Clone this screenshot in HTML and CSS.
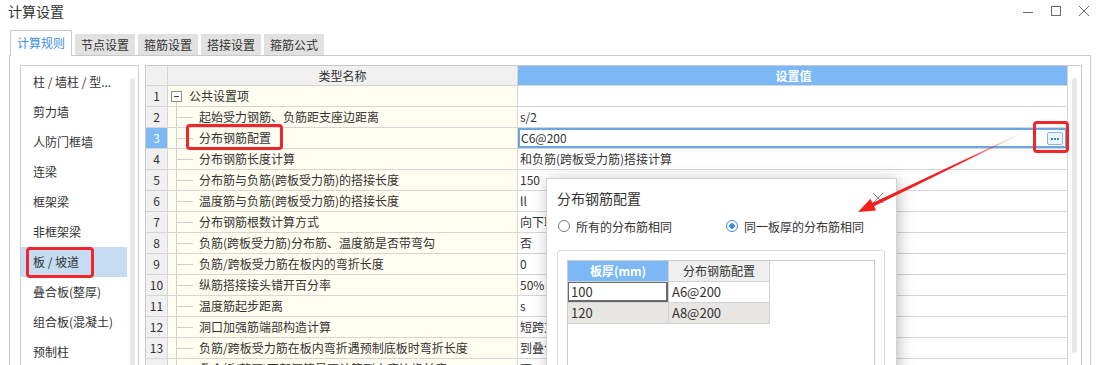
FILE: index.html
```html
<!DOCTYPE html>
<html lang="zh-CN">
<head>
    <meta charset="UTF-8">
    <meta name="viewport" content="width=device-width, initial-scale=1.0">
    <title>计算设置</title>
    <link rel="stylesheet" href="styles.css">
</head>
<body>
<div class="window">
    <div class="titlebar">
        <span class="wintitle">计算设置</span>
        <div class="winbtns">
            <svg width="10" height="10" viewBox="0 0 10 10"><path d="M0 6.5h10" stroke="#6b6b6b" stroke-width="1"/></svg>
            <svg width="10" height="10" viewBox="0 0 10 10"><rect x="0.5" y="0.5" width="9" height="9" fill="none" stroke="#6b6b6b"/></svg>
            <svg width="10" height="10" viewBox="0 0 10 10"><path d="M0 0L10 10M10 0L0 10" stroke="#6b6b6b" stroke-width="1"/></svg>
        </div>
    </div>

    <div class="tabs">
        <div class="tab active">计算规则</div>
        <div class="tab">节点设置</div>
        <div class="tab">箍筋设置</div>
        <div class="tab">搭接设置</div>
        <div class="tab">箍筋公式</div>
    </div>

    <div class="pane">
        <div class="sidebar">
            <ul class="menu">
                <li>柱 / 墙柱 / 型...</li>
                <li>剪力墙</li>
                <li>人防门框墙</li>
                <li>连梁</li>
                <li>框架梁</li>
                <li>非框架梁</li>
                <li class="sel">板 / 坡道</li>
                <li>叠合板(整厚)</li>
                <li>组合板(混凝土)</li>
                <li>预制柱</li>
            </ul>
            <div class="track"><div class="thumb"></div></div>
        </div>

        <div class="grid">
            <div class="cells">
                <div class="row head">
                    <div class="num"></div>
                    <div class="name">类型名称</div>
                    <div class="val">设置值</div>
                </div>
                <div class="row">
                    <div class="num">1</div>
                    <div class="name top"><i class="fold"></i>公共设置项</div>
                    <div class="val"></div>
                </div>
                <div class="row">
                    <div class="num">2</div>
                    <div class="name"><i class="tree"></i>起始受力钢筋、负筋距支座边距离</div>
                    <div class="val">s/2</div>
                </div>
                <div class="row cur">
                    <div class="num">3</div>
                    <div class="name"><i class="tree"></i>分布钢筋配置</div>
                    <div class="val">C6@200
                        <span class="more">
                            <svg width="14" height="11" viewBox="0 0 14 11"><rect x="3" y="5" width="2" height="2" fill="#3f88d8"/><rect x="6" y="5" width="2" height="2" fill="#3f88d8"/><rect x="9" y="5" width="2" height="2" fill="#3f88d8"/></svg>
                        </span>
                    </div>
                </div>
                <div class="row">
                    <div class="num">4</div>
                    <div class="name"><i class="tree"></i>分布钢筋长度计算</div>
                    <div class="val">和负筋(跨板受力筋)搭接计算</div>
                </div>
                <div class="row">
                    <div class="num">5</div>
                    <div class="name"><i class="tree"></i>分布筋与负筋(跨板受力筋)的搭接长度</div>
                    <div class="val">150</div>
                </div>
                <div class="row">
                    <div class="num">6</div>
                    <div class="name"><i class="tree"></i>温度筋与负筋(跨板受力筋)的搭接长度</div>
                    <div class="val">ll</div>
                </div>
                <div class="row">
                    <div class="num">7</div>
                    <div class="name"><i class="tree"></i>分布钢筋根数计算方式</div>
                    <div class="val">向下取整+1</div>
                </div>
                <div class="row">
                    <div class="num">8</div>
                    <div class="name"><i class="tree"></i>负筋(跨板受力筋)分布筋、温度筋是否带弯勾</div>
                    <div class="val">否</div>
                </div>
                <div class="row">
                    <div class="num">9</div>
                    <div class="name"><i class="tree"></i>负筋/跨板受力筋在板内的弯折长度</div>
                    <div class="val">0</div>
                </div>
                <div class="row">
                    <div class="num">10</div>
                    <div class="name"><i class="tree"></i>纵筋搭接接头错开百分率</div>
                    <div class="val">50%</div>
                </div>
                <div class="row">
                    <div class="num">11</div>
                    <div class="name"><i class="tree"></i>温度筋起步距离</div>
                    <div class="val">s</div>
                </div>
                <div class="row">
                    <div class="num">12</div>
                    <div class="name"><i class="tree"></i>洞口加强筋端部构造计算</div>
                    <div class="val">短跨方向</div>
                </div>
                <div class="row">
                    <div class="num">13</div>
                    <div class="name"><i class="tree"></i>负筋/跨板受力筋在板内弯折遇预制底板时弯折长度</div>
                    <div class="val">到叠合板(全部)顶</div>
                </div>
                <div class="row">
                    <div class="num">14</div>
                    <div class="name"><i class="tree"></i>叠合板(整厚)下部钢筋是否计算到支座边缘长度</div>
                    <div class="val">否</div>
                </div>
            </div>
            <div class="track"><div class="thumb"></div></div>
        </div>
    </div>

    <!-- dialog over the grid -->
    <div class="dialog">
        <div class="dlg-head">
            <span class="dlg-title">分布钢筋配置</span>
            <svg width="10" height="10" viewBox="0 0 10 10"><path d="M0 0L10 10M10 0L0 10" stroke="#8a8a8a"/></svg>
        </div>
        <div class="radios">
            <label class="radio"><i class="dot"></i>所有的分布筋相同</label>
            <label class="radio"><i class="dot on"></i>同一板厚的分布筋相同</label>
        </div>
        <div class="groupbox">
            <div class="subgrid">
                <div class="subrow subhead">
                    <div class="hl">板厚(mm)</div>
                    <div>分布钢筋配置</div>
                </div>
                <div class="subrow">
                    <div class="edit">100</div>
                    <div>A6@200</div>
                </div>
                <div class="subrow alt">
                    <div>120</div>
                    <div>A8@200</div>
                </div>
            </div>
        </div>
    </div>

    <!-- red annotations -->
    <div class="mark mark-side"></div>
    <div class="mark mark-row"></div>
    <div class="mark mark-btn"></div>
    <svg class="arrow" width="1099" height="365" viewBox="0 0 1099 365">
        <defs>
            <linearGradient id="fade" gradientUnits="userSpaceOnUse" x1="1020" y1="134" x2="858" y2="212">
                <stop offset="0" stop-color="#f21f1f" stop-opacity="0.05"/>
                <stop offset="0.35" stop-color="#f21f1f" stop-opacity="1"/>
                <stop offset="1" stop-color="#f21f1f" stop-opacity="1"/>
            </linearGradient>
        </defs>
        <polygon fill="url(#fade)" points="1019.9,133.7 872.5,203.0 870.5,198.7 858,212 876.1,210.5 874.1,206.2 1020.1,134.3"/>
    </svg>
</div>
</body>
</html>
```

FILE: styles.css
```css
*{
    margin: 0;
    padding: 0;
    box-sizing: border-box;
}
body{
    width: 1099px;
    height: 365px;
    overflow: hidden;
    background: #fff;
    font-family: "Noto Sans CJK SC", "Microsoft YaHei", sans-serif;
    font-size: 12px;
    color: #333;
}
.window{
    position: relative;
    height: 365px;
}

/* title bar */
.titlebar{
    display: flex;
    justify-content: space-between;
    align-items: center;
    height: 22px;
    padding: 0 10px 0 8px;
}
.wintitle{
    font-size: 14px;
    line-height: 22px;
}
.winbtns{
    display: flex;
    gap: 18px;
}
.winbtns svg{
    display: block;
}

/* tabs */
.tabs{
    display: flex;
    align-items: flex-end;
    gap: 3px;
    height: 25px;
    margin-top: 8px;
    padding-left: 10px;
}
.tab{
    width: 60px;
    height: 21px;
    line-height: 21px;
    text-align: center;
    background: #e1e1e1;
}
.tab.active{
    position: relative;
    z-index: 1;
    width: 62px;
    height: 26px;
    margin-bottom: -1px;
    line-height: 24px;
    background: #fff;
    color: #3b8fe2;
    border: 1px solid #c9c9c9;
    border-bottom: none;
    border-radius: 2px 2px 0 0;
}
.pane{
    display: flex;
    gap: 6px;
    width: 1082px;
    height: 330px;
    margin-left: 9px;
    padding: 9px 8px 0 10px;
    border: 1px solid #c9c9c9;
}

/* left list */
.sidebar{
    display: flex;
    width: 119px;
    border: 1px solid #cfcfcf;
}
.menu{
    width: 106px;
    padding-top: 1px;
    list-style: none;
}
.menu li{
    height: 30px;
    line-height: 30px;
    padding-left: 12px;
    white-space: nowrap;
}
.menu li.sel{
    background: #c6dcf2;
}
.sidebar .track{
    width: 5px;
    margin-left: 3px;
}
.thumb{
    width: 5px;
    height: 400px;
    margin-top: 12px;
    border-radius: 3px;
    background: #e8e8e8;
}

/* settings grid */
.grid{
    display: flex;
    width: 937px;
    border: 1px solid #c8c8c8;
}
.cells{
    width: 922px;
}
.grid .track{
    width: 13px;
    padding-left: 4px;
}
.grid .thumb{
    height: 275px;
}
.row{
    display: flex;
    height: 21px;
    border-bottom: 1px solid #d6d6d6;
}
.row > div{
    display: flex;
    align-items: center;
    line-height: 20px;
    white-space: nowrap;
    overflow: hidden;
    border-right: 1px solid #d6d6d6;
}
.num{
    width: 22px;
    justify-content: center;
    background: #f0f0f0;
}
.name{
    width: 350px;
    background: #fffdf0;
}
.val{
    width: 550px;
    padding-left: 2px;
    background: #fff;
}
.row.head{
    height: 20px;
}
.head .name{
    justify-content: center;
    background: #f0f0f0;
}
.head .val{
    justify-content: center;
    background: #7cb8f5;
    color: #fff;
    font-weight: bold;
}
.tree{
    width: 31px;
    height: 100%;
    flex: none;
    background-image: linear-gradient(#cfcfcf, #cfcfcf), linear-gradient(#cfcfcf, #cfcfcf);
    background-size: 1px 100%, 16px 1px;
    background-position: 8px 0, 9px 50%;
    background-repeat: no-repeat;
}
.name.top{
    background: linear-gradient(#cfcfcf, #cfcfcf) 8px 16px / 1px 5px no-repeat, #fffdf0;
}
.fold{
    width: 11px;
    height: 11px;
    flex: none;
    margin: 0 7px 0 3px;
    border: 1px solid #8c8c8c;
    background: linear-gradient(#444, #444) center / 5px 1px no-repeat, #fff;
}
.row.cur .num{
    background: #7cb9f5;
    color: #fff;
}
.row.cur .val{
    padding-left: 3px;
    box-shadow: inset 0 0 0 2px #6ca7e3;
}
.more{
    display: flex;
    align-items: center;
    justify-content: center;
    width: 16px;
    height: 13px;
    margin: 0 4px 0 auto;
    border: 1px solid #86b4e6;
    border-radius: 2px;
    background: #edf4fc;
}

/* dialog */
.dialog{
    position: absolute;
    left: 546px;
    top: 178px;
    z-index: 5;
    width: 351px;
    height: 230px;
    background: #fff;
    border: 1px solid #d2d2d2;
    box-shadow: 2px 2px 14px rgba(0, 0, 0, .25);
}
.dlg-head{
    display: flex;
    justify-content: space-between;
    align-items: center;
    height: 20px;
    margin: 9px 13px 0 10px;
}
.dlg-title{
    font-size: 14px;
    line-height: 20px;
}
.radios{
    display: flex;
    align-items: center;
    gap: 54px;
    height: 18px;
    margin: 9px 0 0 11px;
}
.radio{
    display: flex;
    align-items: center;
    gap: 6px;
}
.dot{
    width: 12px;
    height: 12px;
    border: 1px solid #7a7a7a;
    border-radius: 50%;
    background: #fff;
}
.dot.on{
    border-color: #3a8ee6;
    background: radial-gradient(circle, #3a8ee6 0 2.5px, #fff 3px);
}
.groupbox{
    width: 328px;
    height: 140px;
    margin: 15px 0 0 10px;
    padding: 9px 0 0 9px;
    border: 1px solid #dadada;
    border-radius: 3px;
}
.subgrid{
    width: 308px;
    height: 130px;
    border: 1px solid #c8c8c8;
}
.subrow{
    display: flex;
    height: 21px;
}
.subrow div{
    width: 101px;
    padding-left: 3px;
    line-height: 20px;
    font-size: 13px;
    border-right: 1px solid #d2d2d2;
    border-bottom: 1px solid #d2d2d2;
}
.subhead div{
    padding-left: 0;
    text-align: center;
    font-size: 12px;
    background: #efefef;
}
.subhead .hl{
    background: #7cb8f5;
    color: #fff;
    font-weight: bold;
}
.subrow .edit{
    box-shadow: inset 0 0 0 1px #6a6a6a, inset -1px -1px 0 1px #6a6a6a;
}
.subrow.alt div{
    background: #e7e6e3;
}

/* annotations */
.mark{
    position: absolute;
    z-index: 6;
    border: 3px solid #f0262a;
    border-radius: 4px;
}
.mark-side{
    left: 26px;
    top: 247px;
    width: 68px;
    height: 31px;
}
.mark-row{
    left: 186px;
    top: 124px;
    width: 97px;
    height: 26px;
}
.mark-btn{
    left: 1033px;
    top: 121px;
    width: 36px;
    height: 32px;
}
.arrow{
    position: absolute;
    left: 0;
    top: 0;
    z-index: 7;
    pointer-events: none;
}
```
